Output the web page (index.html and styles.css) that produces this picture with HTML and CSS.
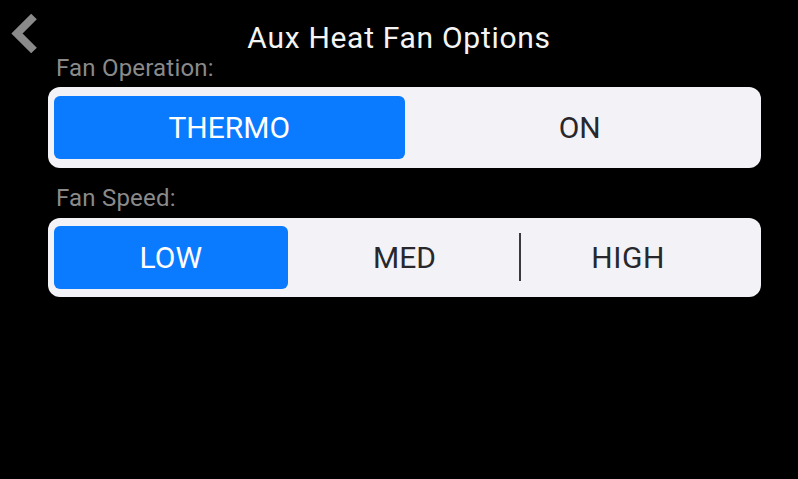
FILE: index.html
```html
<!DOCTYPE html>
<html>
<head>
<meta charset="utf-8">
<link rel="stylesheet" href="styles.css">
</head>
<body>
<div class="screen">
  <header class="header">
    <div class="back">
      <svg width="48" height="54" viewBox="0 0 48 54">
        <polyline points="34,16.5 17,33.5 34,50.5" fill="none" stroke="#8a8a8a" stroke-width="8" stroke-linejoin="miter" stroke-linecap="butt"/>
      </svg>
    </div>
    <h1 class="title">Aux Heat Fan Options</h1>
    <div></div>
  </header>
  <main class="content">
    <div class="label">Fan Operation:</div>
    <div class="seg seg-two">
      <div class="opt active">THERMO</div>
      <div class="opt">ON</div>
    </div>
    <div class="label label-second">Fan Speed:</div>
    <div class="seg seg-three">
      <div class="opt active">LOW</div>
      <div class="opt">MED</div>
      <div class="opt divided"><span class="shift">HIGH</span></div>
    </div>
  </main>
</div>
</body>
</html>
```

FILE: styles.css
```css
html, body {
  margin: 0;
  padding: 0;
  background: #000;
}
body {
  font-family: Roboto, "Liberation Sans", sans-serif;
  width: 798px;
  height: 479px;
  overflow: hidden;
}
.screen {
  display: flex;
  flex-direction: column;
}
.header {
  display: grid;
  grid-template-columns: 60px 1fr 60px;
  align-items: start;
  height: 54px;
}
.back {
  height: 54px;
}
.back svg {
  display: block;
}
.title {
  margin: 22px 0 0;
  font-weight: 400;
  font-size: 30px;
  line-height: 32px;
  letter-spacing: 0.7px;
  color: #f4f4f4;
  text-align: center;
}
.content {
  display: flex;
  flex-direction: column;
  padding: 0 37px 0 48px;
}
.label {
  font-size: 24px;
  line-height: 28px;
  letter-spacing: 0.2px;
  color: #8a8a8a;
  padding-left: 8px;
}
.label-second {
  margin-top: 16px;
}
.seg {
  display: flex;
  background: #f2f2f7;
  border-radius: 12px;
  padding: 9px 6px;
  margin-top: 5px;
}
.seg-three {
  padding: 8px 6px;
  margin-top: 6px;
}
.opt {
  flex: 1 1 0;
  min-width: 0;
  height: 63px;
  display: flex;
  align-items: center;
  justify-content: center;
  font-size: 30px;
  color: #28282c;
  border-radius: 6px;
  position: relative;
}
.opt.active {
  background: #0a7bff;
  color: #fff;
}
.shift {
  margin-right: 20px;
  letter-spacing: 0.6px;
}
.divided::before {
  content: "";
  position: absolute;
  left: -2px;
  top: 7px;
  bottom: 8px;
  width: 2px;
  background: #3a3a3e;
}
```
